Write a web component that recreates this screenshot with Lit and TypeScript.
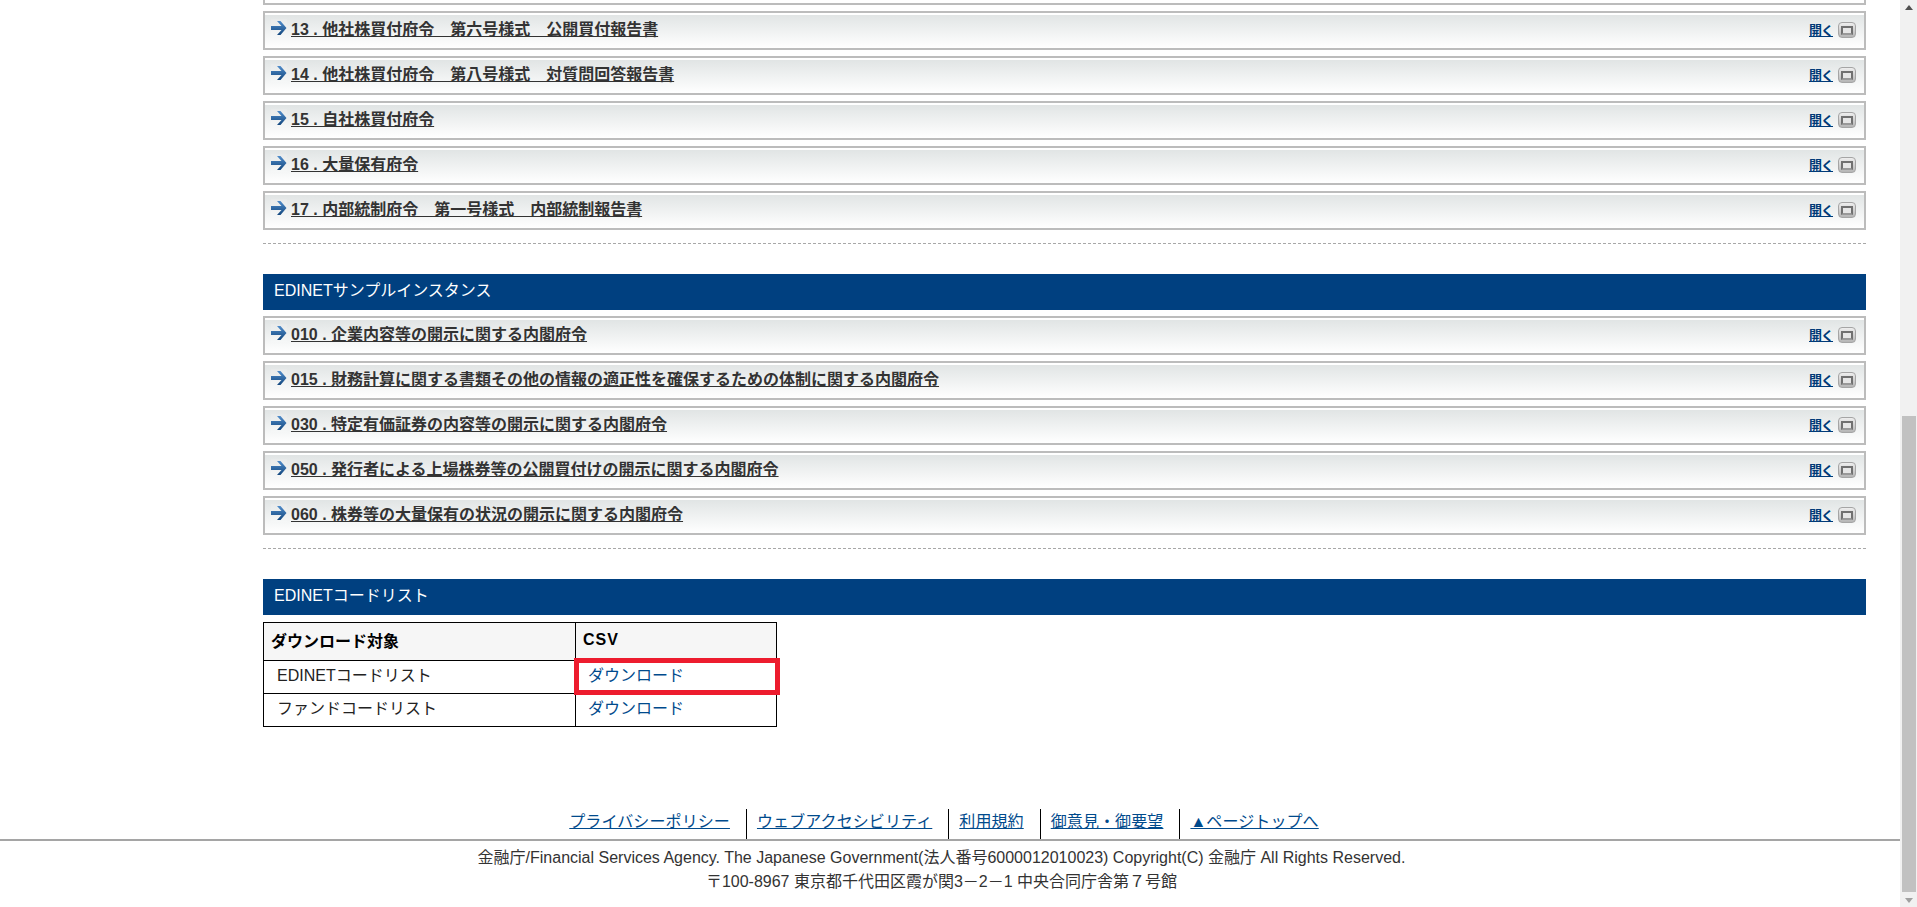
import { LitElement, html, css, svg } from 'lit';
import { customElement } from 'lit/decorators.js';

const TAXONOMY_ROWS = [
    '13 . 他社株買付府令　第六号様式　公開買付報告書',
    '14 . 他社株買付府令　第八号様式　対質問回答報告書',
    '15 . 自社株買付府令',
    '16 . 大量保有府令',
    '17 . 内部統制府令　第一号様式　内部統制報告書',
];

const SAMPLE_ROWS = [
    '010 . 企業内容等の開示に関する内閣府令',
    '015 . 財務計算に関する書類その他の情報の適正性を確保するための体制に関する内閣府令',
    '030 . 特定有価証券の内容等の開示に関する内閣府令',
    '050 . 発行者による上場株券等の公開買付けの開示に関する内閣府令',
    '060 . 株券等の大量保有の状況の開示に関する内閣府令',
];

const FOOTER_LINKS = ['プライバシーポリシー', 'ウェブアクセシビリティ', '利用規約', '御意見・御要望', '▲ページトップへ'];

const arrow = svg`<svg class="arrow" width="16" height="18" viewBox="0 0 16 18">
    <defs>
        <linearGradient id="arrow-fill" x1="0" y1="0" x2="0" y2="1">
            <stop offset="0" stop-color="#4f8ccb" />
            <stop offset="1" stop-color="#14487f" />
        </linearGradient>
    </defs>
    <path d="M0 7H10.5L6 2H9.5L15.5 9L9.5 16H6L10.5 11H0Z" fill="url(#arrow-fill)" />
</svg>`;

@customElement('app-root')
export class AppRoot extends LitElement {
    static styles = css`
        :host {
            display: flex;
            height: 907px;
            overflow: hidden;
            background: #fff;
            font-family: 'Liberation Sans', 'Noto Sans CJK JP', sans-serif;
            font-size: 16px;
            color: #000;
        }

        .page {
            flex: 1;
            min-width: 0;
        }

        .content {
            margin: 0 34px 0 263px;
        }

        .row-cut {
            height: 5px;
            box-sizing: border-box;
            border: 2px solid #bcbcbc;
            border-top: 0;
            margin-bottom: 6px;
            background: #fff;
        }

        .row {
            display: flex;
            align-items: flex-start;
            height: 39px;
            box-sizing: border-box;
            border: 2px solid #bcbcbc;
            margin-bottom: 6px;
            background: linear-gradient(#dfe3e3, #fff);
            box-shadow: inset 0 2px 0 #fff;
            padding: 4px 8px 0 6px;
        }

        .row:last-of-type {
            margin-bottom: 0;
        }

        .arrow {
            flex: none;
            margin-top: 2px;
            margin-right: 4px;
            background: rgba(255, 255, 255, 0.12);
        }

        .title {
            flex: 1;
            font-weight: bold;
            line-height: 22px;
            margin-top: 2px;
            color: #333;
            text-decoration: underline;
            white-space: nowrap;
        }

        .open {
            margin-top: 6px;
            width: 24px;
            font-size: 13px;
            line-height: 16px;
            font-weight: bold;
            letter-spacing: -1px;
            color: #003a78;
            text-decoration: underline;
            white-space: nowrap;
        }

        .toggle {
            flex: none;
            display: flex;
            align-items: center;
            justify-content: center;
            width: 18px;
            height: 16px;
            margin: 5px 0 0 5px;
            box-sizing: border-box;
            border: 1px solid #a5a5a5;
            border-radius: 4px;
            background: linear-gradient(#eee, #b5b5b5);
        }

        .toggle span {
            width: 12px;
            height: 9px;
            box-sizing: border-box;
            border: 2px solid #707070;
            border-bottom-color: #999;
            background: #e6e6e6;
        }

        .rule {
            height: 0;
            border-top: 1px dashed #a8a8a8;
            margin: 13px 0 30px;
        }

        .band {
            height: 36px;
            line-height: 34px;
            box-sizing: border-box;
            padding-left: 11px;
            background: #004080;
            color: #fff;
            margin-bottom: 6px;
        }

        table {
            border-collapse: collapse;
            margin-top: 7px;
            width: 514px;
            table-layout: fixed;
        }

        th,
        td {
            box-sizing: border-box;
            border: 1px solid #000;
            text-align: left;
            padding: 0;
        }

        th {
            height: 38px;
            background: #f6f6f6;
            font-weight: bold;
            padding: 0 0 4px 7px;
        }

        th.csv {
            letter-spacing: 1px;
        }

        td {
            height: 33px;
            color: #222;
            padding: 0 0 6px 13px;
        }

        .cell-marked {
            position: relative;
            padding-left: 12px;
        }

        .cell-plain {
            padding-left: 12px;
        }

        .marker {
            position: absolute;
            left: -2px;
            top: -3px;
            width: 206px;
            height: 37px;
            box-sizing: border-box;
            border: 5px solid #ed1c2e;
        }

        a {
            color: #004a8c;
            text-decoration: none;
        }

        .links {
            display: flex;
            justify-content: center;
            margin-top: 82px;
            height: 30px;
            padding-right: 6px;
        }

        .links a {
            display: block;
            margin-top: 2px;
            height: 21px;
            line-height: 21px;
            letter-spacing: 0.1px;
            text-decoration: underline;
        }

        .link-item {
            padding: 0 16px 0 10px;
            border-left: 1px solid #000;
        }

        .link-item:first-child {
            border-left: 0;
        }

        .legal {
            border-top: 2px solid #a5a5a5;
            text-align: center;
            color: #333;
            line-height: 24px;
            padding: 5px 17px 0 0;
        }

        .scrollbar {
            flex: none;
            display: flex;
            flex-direction: column;
            align-items: center;
            width: 17px;
            background: #f1f1f1;
        }

        .scroll-up {
            width: 0;
            height: 0;
            margin-top: 5px;
            border: 4px solid transparent;
            border-top: 0;
            border-bottom: 5px solid #505050;
        }

        .thumb {
            width: 14px;
            height: 476px;
            margin-top: 406px;
            background: #c1c1c1;
        }

        .scroll-down {
            width: 0;
            height: 0;
            margin-top: 6px;
            border: 4px solid transparent;
            border-bottom: 0;
            border-top: 5px solid #a0a0a0;
        }
    `;

    renderRow(title: string) {
        return html`<div class="row">
            ${arrow}
            <span class="title">${title}</span>
            <span class="open">開く</span>
            <span class="toggle"><span></span></span>
        </div>`;
    }

    render() {
        return html`
            <div class="page">
                <div class="content">
                    <div class="row-cut"></div>
                    ${TAXONOMY_ROWS.map((row) => this.renderRow(row))}
                    <div class="rule"></div>
                    <div class="band">EDINETサンプルインスタンス</div>
                    ${SAMPLE_ROWS.map((row) => this.renderRow(row))}
                    <div class="rule"></div>
                    <div class="band">EDINETコードリスト</div>
                    <table>
                        <colgroup>
                            <col style="width: 312px" />
                            <col />
                        </colgroup>
                        <tr>
                            <th>ダウンロード対象</th>
                            <th class="csv">CSV</th>
                        </tr>
                        <tr>
                            <td>EDINETコードリスト</td>
                            <td class="cell-marked">
                                <a href="#">ダウンロード</a>
                                <div class="marker"></div>
                            </td>
                        </tr>
                        <tr>
                            <td>ファンドコードリスト</td>
                            <td class="cell-plain"><a href="#">ダウンロード</a></td>
                        </tr>
                    </table>
                </div>
                <div class="links">
                    ${FOOTER_LINKS.map((link) => html`<div class="link-item"><a href="#">${link}</a></div>`)}
                </div>
                <div class="legal">
                    <div>金融庁/Financial Services Agency. The Japanese Government(法人番号6000012010023) Copyright(C) 金融庁 All Rights Reserved.</div>
                    <div>〒100-8967 東京都千代田区霞が関3－2－1 中央合同庁舎第７号館</div>
                </div>
            </div>
            <div class="scrollbar">
                <div class="scroll-up"></div>
                <div class="thumb"></div>
                <div class="scroll-down"></div>
            </div>
        `;
    }
}
